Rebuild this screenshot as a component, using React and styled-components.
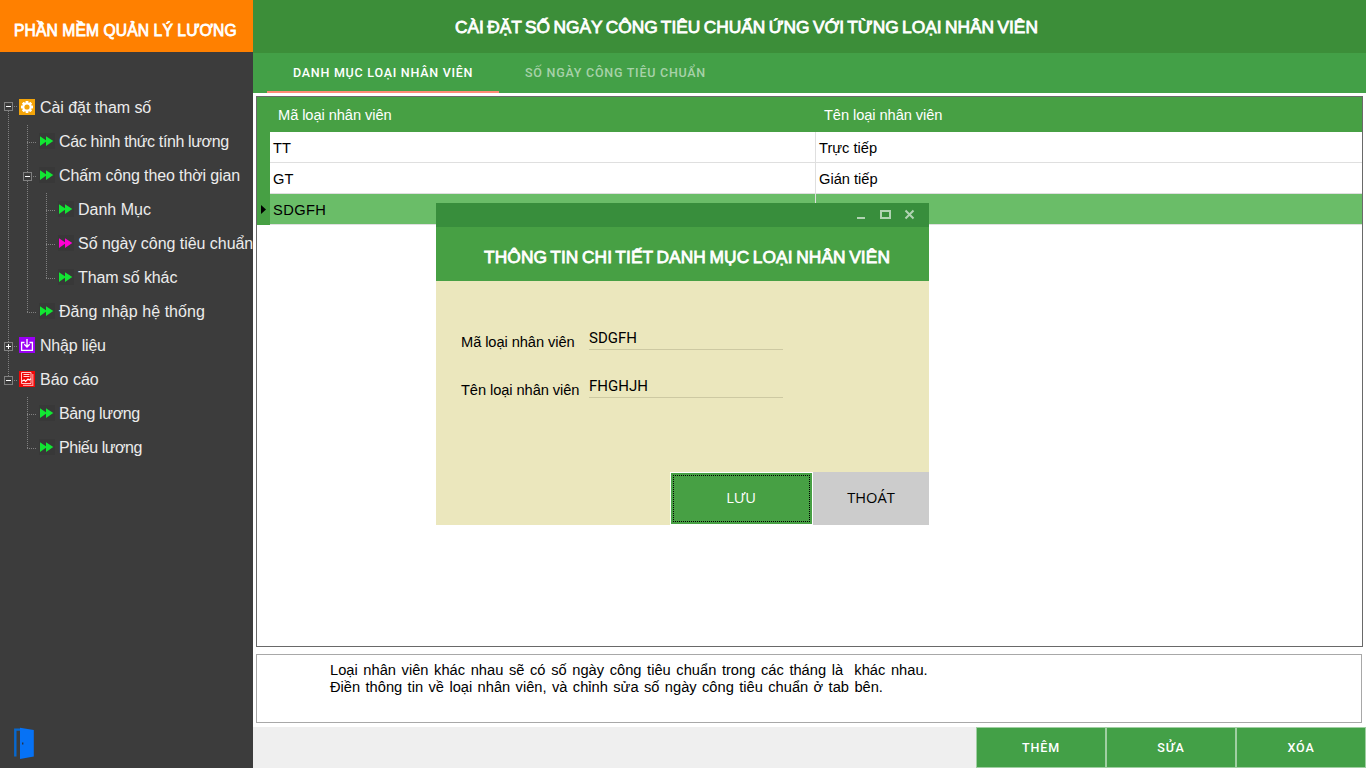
import React from "react";
import styled, { createGlobalStyle, css } from "styled-components";

const Global = createGlobalStyle`
  * { box-sizing: border-box; }
  html, body { margin: 0; padding: 0; }
  body { background: #fff; overflow: hidden; font-family: "Liberation Sans", Arial, sans-serif; }
  button, input { font-family: inherit; margin: 0; padding: 0; border: 0; border-radius: 0; outline: none; }
`;

const Screen = styled.div`
  position: relative;
  display: flex;
  width: 1366px;
  height: 768px;
  overflow: hidden;
`;

/* ---------- sidebar ---------- */

const Sidebar = styled.aside`
  flex: none;
  display: flex;
  flex-direction: column;
  width: 253px;
  background: #3c3c3c;
  overflow: hidden;
`;

const Brand = styled.div`
  flex: none;
  height: 52px;
  padding: 5px 0 0 14px;
  margin-bottom: 39px;
  background: #ff8000;
  color: #fff;
  font-size: 15.6px;
  line-height: 52px;
  letter-spacing: 0.13px;
  white-space: nowrap;
  -webkit-text-stroke: 0.8px #fff;
`;

const Tree = styled.ul`
  flex: 1;
  margin: 0;
  padding: 0;
  list-style: none;
`;

const TreeRow = styled.li`
  display: flex;
  align-items: center;
  height: 34px;
`;

const dotsV = "repeating-linear-gradient(to bottom, #808080 0 1px, transparent 1px 2px)";
const dotsH = "repeating-linear-gradient(to right, #808080 0 1px, transparent 1px 2px)";

const Guide = styled.span`
  flex: none;
  display: flex;
  align-items: center;
  width: 19px;
  height: 34px;
  padding-left: 4px;
  background-repeat: no-repeat;
  ${(p) => p.$kind === "line" && css`
    background-image: ${dotsV};
    background-size: 1px 34px;
    background-position: 8px 0;
  `}
  ${(p) => p.$kind === "tee" && css`
    background-image: ${dotsV}, ${dotsH};
    background-size: 1px 34px, 10px 1px;
    background-position: 8px 0, 8px 17px;
  `}
  ${(p) => p.$kind === "end" && css`
    background-image: ${dotsV}, ${dotsH};
    background-size: 1px 18px, 10px 1px;
    background-position: 8px 0, 8px 17px;
  `}
  ${(p) => p.$kind === "start" && css`
    padding-bottom: 4px;
    background-image: ${dotsV}, ${dotsH};
    background-size: 1px 18px, 10px 1px;
    background-position: 8px 16px, 8px 15px;
  `}
`;

const Expander = styled.span`
  position: relative;
  top: 0.5px;
  width: 9px;
  height: 9px;
  border: 1px solid #808080;
  background:
    linear-gradient(#fff, #fff) 1px 3px / 5px 1px no-repeat,
    linear-gradient(#fff, #fff) 3px 1px / ${(p) => (p.$open ? "0 0" : "1px 5px")} no-repeat,
    #3c3c3c;
`;

const IconBox = styled.span`
  flex: none;
  width: 16px;
  height: 16px;
  margin: -2px 5px 0 0;
  background: ${(p) => p.$bg};
  svg { display: block; }
`;

const ArrowBox = styled(IconBox)`
  margin: -2px 4px 0 1px;
`;

const TreeLabel = styled.span`
  color: #ececec;
  font-size: 16px;
  line-height: 34px;
  letter-spacing: ${(p) => p.$spacing || 0}px;
  white-space: nowrap;
`;

const Exit = styled.div`
  flex: none;
  height: 41px;
  padding-left: 13px;
  svg { display: block; }
`;

const GearIcon = () => (
  <svg width="16" height="16" viewBox="0 0 16 16">
    <g fill="#fff">
      {[0, 45, 90, 135].map((a) => (
        <rect key={a} x="6.6" y="2" width="2.8" height="12" rx=".4" transform={`rotate(${a} 8 8)`} />
      ))}
      <circle cx="8" cy="8" r="4.6" />
    </g>
    <circle cx="8" cy="8" r="2.6" fill="#f3a40a" />
  </svg>
);

const ImportIcon = () => (
  <svg width="16" height="16" viewBox="0 0 16 16" fill="none" stroke="#fff" strokeWidth="1.3">
    <path d="M5.5 5.5H2.6v7.8h10.8V5.5H10.5" />
    <path d="M8 2v8M5.3 7.3 8 10l2.7-2.7" />
  </svg>
);

const ReportIcon = () => (
  <svg width="16" height="16" viewBox="0 0 16 16" fill="none">
    <path d="M13.8 3v11.3H4" stroke="#ff9b9b" strokeWidth="1.2" />
    <path d="M2.5 1.5h9.5v11H2.5z" stroke="#ffc9c9" />
    <path d="M4.5 3.5h6M4.5 5.5h6" stroke="#ffd5d5" />
    <path d="M3 10.3 5.2 9l1.4 1.5L9 8l1.2 1 1.8-1.2" stroke="#fff" strokeWidth="1.2" />
  </svg>
);

const ArrowsIcon = ({ color }) => (
  <svg width="16" height="16" viewBox="0 0 16 16" fill={color}>
    <path d="M1 3.2 8 8 1 13z" />
    <path d="M7 3.2 14.3 8 7 13z" />
  </svg>
);

const DoorIcon = () => (
  <svg width="22" height="33" viewBox="0 0 22 33">
    <path d="M7 2.6H2.3v27" fill="none" stroke="#0768cf" strokeWidth="2.4" />
    <path d="M7 .8 20.8 3v26.5L7 32z" fill="#0672f5" />
    <rect x="9" y="15.5" width="1.4" height="2" fill="#24344c" />
  </svg>
);

const TREE = [
  { g: ["start"], open: true, icon: "gear", label: "Cài đặt tham số", spacing: -0.06 },
  { g: ["line", "tee"], label: "Các hình thức tính lương", spacing: -0.37 },
  { g: ["line", "tee"], open: true, label: "Chấm công theo thời gian", spacing: -0.12 },
  { g: ["line", "line", "tee"], label: "Danh Mục" },
  { g: ["line", "line", "tee"], active: true, label: "Số ngày công tiêu chuẩn", spacing: -0.04 },
  { g: ["line", "line", "end"], label: "Tham số khác", spacing: -0.1 },
  { g: ["line", "end"], label: "Đăng nhập hệ thống", spacing: 0.05 },
  { g: ["tee"], open: false, icon: "import", label: "Nhập liệu", spacing: -0.2 },
  { g: ["end"], open: true, icon: "report", label: "Báo cáo" },
  { g: ["none", "tee"], label: "Bảng lương", spacing: -0.35 },
  { g: ["none", "end"], label: "Phiếu lương", spacing: -0.45 },
];

const ICONS = {
  gear: { bg: "#f3a40a", el: <GearIcon /> },
  import: { bg: "#9a00f5", el: <ImportIcon /> },
  report: { bg: "#ee0808", el: <ReportIcon /> },
};

function TreeItem({ item }) {
  const icon = ICONS[item.icon];
  return (
    <TreeRow>
      {item.g.map((kind, i) => (
        <Guide key={i} $kind={kind}>
          {item.open !== undefined && i === item.g.length - 1 && <Expander $open={item.open} />}
        </Guide>
      ))}
      {icon ? (
        <IconBox $bg={icon.bg}>{icon.el}</IconBox>
      ) : (
        <ArrowBox $bg="#383838">
          <ArrowsIcon color={item.active ? "#ff00d4" : "#12e633"} />
        </ArrowBox>
      )}
      <TreeLabel $spacing={item.spacing}>{item.label}</TreeLabel>
    </TreeRow>
  );
}

/* ---------- main area ---------- */

const Main = styled.main`
  flex: 1;
  display: flex;
  flex-direction: column;
  min-width: 0;
`;

const TitleBar = styled.header`
  flex: none;
  height: 53px;
  padding-left: 202px;
  background: #3c8e39;
  color: #fff;
  font-size: 17.33px;
  line-height: 54px;
  word-spacing: -1.4px;
  white-space: nowrap;
  -webkit-text-stroke: 0.8px #fff;
`;

const Tabs = styled.nav`
  flex: none;
  display: flex;
  height: 40px;
  padding-left: 14px;
  background: #43a047;
`;

const Tab = styled.div`
  width: ${(p) => p.$width}px;
  height: 40px;
  padding-left: 26px;
  border-bottom: 2px solid ${(p) => (p.$active ? "#ff8a75" : "transparent")};
  color: ${(p) => (p.$active ? "#fff" : "#a7d2a9")};
  font: 500 12.5px/39px Roboto, sans-serif;
  letter-spacing: 0.75px;
  white-space: nowrap;
`;

const Grid = styled.section`
  flex: none;
  width: 1107px;
  height: 551px;
  margin: 3px 0 0 3px;
  border: 1px solid #696969;
  background: #fff;
`;

const GridHead = styled.div`
  display: grid;
  grid-template-columns: 559px 1fr;
  height: 35px;
  background: #47a044;
  color: #fff;
  font-size: 14.67px;
  line-height: 36px;
  letter-spacing: -0.08px;
`;

const HeadCell = styled.div`
  padding-left: ${(p) => p.$indent}px;
`;

const GridRow = styled.div`
  display: grid;
  grid-template-columns: 13px 546px 1fr;
  height: 31px;
  background: ${(p) => (p.$selected ? "#6abd68" : "#fff")};
  color: #000;
  font-size: 14.67px;
  line-height: 30px;
`;

const RowMark = styled.div`
  display: flex;
  align-items: center;
  padding: 0 0 1px 4px;
  background: #47a044;
`;

const Cell = styled.div`
  height: 31px;
  padding: 1px 0 0 3px;
  border-bottom: 1px solid #dfdfdf;
  border-right: ${(p) => (p.$last ? "0" : "1px solid #dfdfdf")};
  letter-spacing: ${(p) => p.$spacing || 0}px;
`;

const Note = styled.section`
  flex: none;
  width: 1106px;
  height: 69px;
  margin: 7px 0 4px 3px;
  padding: 7px 0 0 73px;
  border: 1px solid #a8a8a8;
  font-size: 14.67px;
  line-height: 17px;
`;

const NoteLine = styled.div`
  white-space: pre;
  word-spacing: ${(p) => p.$gap}px;
`;

const Footer = styled.footer`
  flex: 1;
  display: flex;
  justify-content: flex-end;
  background: #efefef;
`;

const FlatButton = styled.button`
  width: 130px;
  height: 41px;
  border: 1px solid #a0cfa2;
  background: #43a047;
  color: #fff;
  font: 500 12.5px/39px Roboto, sans-serif;
  letter-spacing: 0.9px;
`;

/* ---------- dialog ---------- */

const Dialog = styled.div`
  position: absolute;
  left: 436px;
  top: 203px;
  display: flex;
  flex-direction: column;
  width: 493px;
  height: 322px;
  background: #ebe7bd;
`;

const Caption = styled.div`
  display: flex;
  justify-content: flex-end;
  height: 24px;
  padding-right: 14px;
  background: #388e3c;
`;

const DialogTitle = styled.div`
  height: 54px;
  padding: 3px 0 0 48px;
  background: #47a044;
  color: #fff;
  font-size: 17.33px;
  line-height: 55px;
  letter-spacing: 0.1px;
  word-spacing: -1.4px;
  white-space: nowrap;
  -webkit-text-stroke: 0.8px #fff;
`;

const Form = styled.div`
  flex: 1;
  padding: 37px 0 0 25px;
`;

const Field = styled.label`
  display: flex;
  height: 48px;
`;

const FieldLabel = styled.span`
  width: 128px;
  padding-top: 8px;
  font-size: 14.67px;
  line-height: 32px;
  letter-spacing: -0.08px;
  white-space: nowrap;
`;

const FieldInput = styled.input`
  width: 194px;
  height: 32px;
  padding-top: 8px;
  border-bottom: 1px solid #cdc9a2;
  background: transparent;
  color: #000;
  font: 400 15px/22px Roboto, sans-serif;
`;

const Actions = styled.div`
  display: flex;
  justify-content: flex-end;
  height: 53px;
`;

const ActionButton = styled.button`
  width: ${(p) => (p.$primary ? 143 : 116)}px;
  height: 53px;
  border: ${(p) => (p.$primary ? "1px solid #fff" : "0")};
  padding: ${(p) => (p.$primary ? "2px" : "0 0 3px")};
  background: ${(p) => (p.$primary ? "#47a044" : "#cccccc")};
  color: ${(p) => (p.$primary ? "#fff" : "#000")};
  font: 400 14.67px "Open Sans", "Noto Sans", sans-serif;
`;

const FocusRing = styled.span`
  display: flex;
  align-items: center;
  justify-content: center;
  width: 100%;
  height: 47px;
  padding: 0 1px 3px 0;
  border: 1px dotted #000;
`;

const ROWS = [
  { code: "TT", name: "Trực tiếp" },
  { code: "GT", name: "Gián tiếp" },
  { code: "SDGFH", name: "", selected: true, spacing: 0.4 },
];

export default function App() {
  return (
    <Screen>
      <Global />
      <Sidebar>
        <Brand>PHẦN MỀM QUẢN LÝ LƯƠNG</Brand>
        <Tree>
          {TREE.map((item) => (
            <TreeItem key={item.label} item={item} />
          ))}
        </Tree>
        <Exit><DoorIcon /></Exit>
      </Sidebar>

      <Main>
        <TitleBar>CÀI ĐẶT SỐ NGÀY CÔNG TIÊU CHUẨN ỨNG VỚI TỪNG LOẠI NHÂN VIÊN</TitleBar>
        <Tabs>
          <Tab $active $width={232}>DANH MỤC LOẠI NHÂN VIÊN</Tab>
          <Tab $width={232}>SỐ NGÀY CÔNG TIÊU CHUẨN</Tab>
        </Tabs>
        <Grid>
          <GridHead>
            <HeadCell $indent={21}>Mã loại nhân viên</HeadCell>
            <HeadCell $indent={8}>Tên loại nhân viên</HeadCell>
          </GridHead>
          {ROWS.map((r) => (
            <GridRow key={r.code} $selected={r.selected}>
              <RowMark>
                {r.selected && (
                  <svg width="5" height="9" viewBox="0 0 5 9"><path d="M0 0 5 4.5 0 9z" /></svg>
                )}
              </RowMark>
              <Cell $spacing={r.spacing}>{r.code}</Cell>
              <Cell $last>{r.name}</Cell>
            </GridRow>
          ))}
        </Grid>
        <Note>
          <NoteLine $gap={1.56}>
            {"Loại nhân viên khác nhau sẽ có số ngày công tiêu chuẩn trong các tháng là  khác nhau."}
          </NoteLine>
          <NoteLine $gap={1.33}>
            {"Điền thông tin về loại nhân viên, và chỉnh sửa số ngày công tiêu chuẩn ở tab bên."}
          </NoteLine>
        </Note>
        <Footer>
          <FlatButton>THÊM</FlatButton>
          <FlatButton>SỬA</FlatButton>
          <FlatButton>XÓA</FlatButton>
        </Footer>
      </Main>

      <Dialog>
        <Caption>
          <svg width="60" height="24" viewBox="0 0 60 24" fill="none" stroke="#b1d3b3">
            <path d="M2 15h8" strokeWidth="2" />
            <path d="M26 8h9v7h-9z" strokeWidth="2" />
            <path d="m50.5 7.5 8 8M58.5 7.5l-8 8" strokeWidth="2" />
          </svg>
        </Caption>
        <DialogTitle>THÔNG TIN CHI TIẾT DANH MỤC LOẠI NHÂN VIÊN</DialogTitle>
        <Form>
          <Field>
            <FieldLabel>Mã loại nhân viên</FieldLabel>
            <FieldInput defaultValue="SDGFH" />
          </Field>
          <Field>
            <FieldLabel>Tên loại nhân viên</FieldLabel>
            <FieldInput defaultValue="FHGHJH" />
          </Field>
        </Form>
        <Actions>
          <ActionButton $primary><FocusRing>LƯU</FocusRing></ActionButton>
          <ActionButton>THOÁT</ActionButton>
        </Actions>
      </Dialog>
    </Screen>
  );
}
